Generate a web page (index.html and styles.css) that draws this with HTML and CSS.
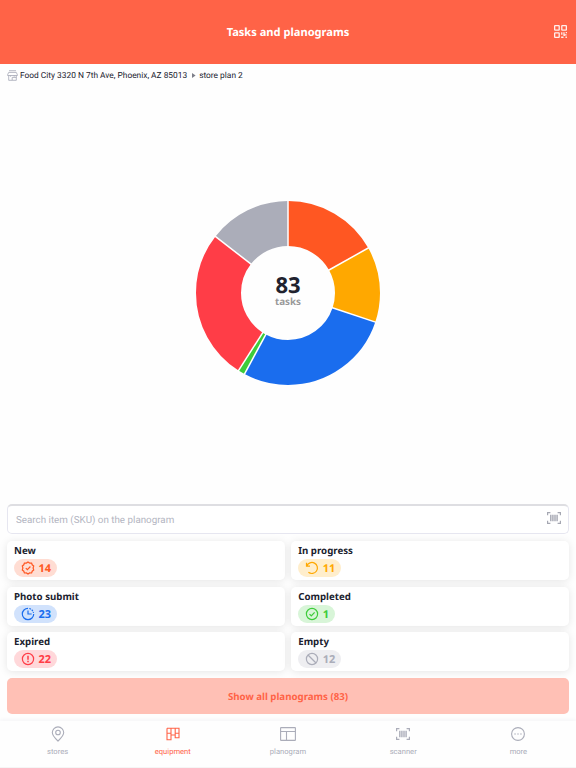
FILE: index.html
```
<!DOCTYPE html>
<html lang="en">
<head>
    <meta charset="UTF-8">
    <meta name="viewport" content="width=device-width, initial-scale=1.0">
    <title>Tasks and planograms</title>
    <link rel="stylesheet" href="styles.css">
</head>
<body>
    <!-- Icons used more than once -->
    <svg class="sprite">
        <symbol id="icon-barcode" viewBox="0 0 14 14">
            <path d="M.6 4.200V1.600h2.800M10.600 1.600h2.800v2.600M13.400 9.800v2.600h-2.800M3.400 12.400H.6V9.800" fill="none" stroke="currentColor" stroke-width="1.2"/>
            <path d="M3.800 3.800v6.400M5.900 3.800v6.400M8 3.800v6.400M10.100 3.800v6.400" stroke="currentColor" stroke-width="1.4"/>
        </symbol>
    </svg>

    <header class="header">
        <h1>Tasks and planograms</h1>
        <svg class="qr-icon" viewBox="0 0 12 12" fill="none" stroke="currentColor" stroke-width="1.2">
            <rect x=".6" y=".6" width="4.2" height="4.2" rx=".4"/>
            <rect x="7.2" y=".6" width="4.2" height="4.2" rx=".4"/>
            <rect x=".6" y="7.2" width="4.2" height="4.2" rx=".4"/>
            <path d="M7.2 6.6v2.5M6.6 11.3h2.2M9.2 6.6v2.6h2.4M11.4 6.4v1.3M10.6 11.3h1.3M9.4 9v1.2"/>
        </svg>
    </header>

    <!-- Store and plan -->
    <div class="breadcrumb">
        <svg class="store-icon" viewBox="0 0 11 11" fill="none" stroke="currentColor" stroke-width=".8">
            <path d="M2 .7h7M1.7 2.4h7.6l1.1 2.4v.7H.6v-.7zM1.7 5.5v4.8h3.5M9.3 5.5v4.8H5.2V7.4h4.1M3.6 5.5v1.2M7.2 5.5v1.2"/>
        </svg>
        <span class="crumb-store">Food City 3320 N 7th Ave, Phoenix, AZ 85013</span>
        <svg class="crumb-arrow" viewBox="0 0 4 5"><path d="M0 0l3.6 2.5L0 5z" fill="currentColor"/></svg>
        <span class="crumb-plan">store plan 2</span>
    </div>

    <!-- Chart, one unit of path length per task -->
    <main class="chart-section">
        <div class="chart">
            <svg viewBox="-92 -92 184 184" width="184" height="184">
                <g fill="none" stroke-width="45" transform="rotate(-90)">
                    <circle r="69.5" pathLength="83" stroke="#ff5722" stroke-dasharray="14 69"/>
                    <circle r="69.5" pathLength="83" stroke="#ffa800" stroke-dasharray="11 72" stroke-dashoffset="-14"/>
                    <circle r="69.5" pathLength="83" stroke="#1a6dee" stroke-dasharray="23 60" stroke-dashoffset="-25"/>
                    <circle r="69.5" pathLength="83" stroke="#3dcc3a" stroke-dasharray="1 82" stroke-dashoffset="-48"/>
                    <circle r="69.5" pathLength="83" stroke="#ff3d47" stroke-dasharray="22 61" stroke-dashoffset="-49"/>
                    <circle r="69.5" pathLength="83" stroke="#abadb9" stroke-dasharray="12 71" stroke-dashoffset="-71"/>
                </g>
                <g stroke="#fff" stroke-width="1.5">
                    <path d="M0-46v-47"/>
                    <path d="M0-46v-47" transform="rotate(60.72)"/>
                    <path d="M0-46v-47" transform="rotate(108.43)"/>
                    <path d="M0-46v-47" transform="rotate(208.19)"/>
                    <path d="M0-46v-47" transform="rotate(212.53)"/>
                    <path d="M0-46v-47" transform="rotate(307.95)"/>
                </g>
            </svg>
            <div class="chart-label">
                <strong>83</strong>
                <span>tasks</span>
            </div>
        </div>
    </main>

    <section class="panel">
        <div class="search">
            <input type="text" placeholder="Search item (SKU) on the planogram">
            <svg class="search-icon"><use href="#icon-barcode"/></svg>
        </div>

        <div class="cards">
            <div class="card">
                <h2>New</h2>
                <div class="badge badge-new">
                    <svg viewBox="0 0 14 14"><path d="M7 1l1.6 1.1 2-.1.6 1.800 1.500 1.200L12.100 7l.6 2-1.500 1.200-.6 1.800-2-.1L7 13l-1.600-1.100-2 .1-.6-1.800L1.300 9l.6-2-.6-2 1.500-1.200.6-1.800 2 .1zM4.800 7.100l1.600 1.600 3-3.200"/></svg>
                    <span>14</span>
                </div>
            </div>
            <div class="card">
                <h2>In progress</h2>
                <div class="badge badge-progress">
                    <svg viewBox="0 0 14 14"><path d="M1.500 1.700v3.500H5M1.800 5A5.500 5.500 0 1 1 3.400 11.200"/></svg>
                    <span>11</span>
                </div>
            </div>
            <div class="card">
                <h2>Photo submit</h2>
                <div class="badge badge-submit">
                    <svg viewBox="0 0 14 14"><path d="M7 1.300A5.700 5.700 0 1 0 12.700 7M7 3.500V7h3.700"/><path d="M8.300 1.500a5.700 5.700 0 0 1 4.200 4.300" stroke-dasharray="1.700 1"/></svg>
                    <span>23</span>
                </div>
            </div>
            <div class="card">
                <h2>Completed</h2>
                <div class="badge badge-completed">
                    <svg viewBox="0 0 14 14"><circle cx="7" cy="7" r="5.6"/><path d="M4.500 7.100l1.800 1.700 3.300-3.400"/></svg>
                    <span>1</span>
                </div>
            </div>
            <div class="card">
                <h2>Expired</h2>
                <div class="badge badge-expired">
                    <svg viewBox="0 0 14 14"><circle cx="7" cy="7" r="5.6"/><path d="M7 3.800v4M7 8.800v1.400" stroke-width="1.5"/></svg>
                    <span>22</span>
                </div>
            </div>
            <div class="card">
                <h2>Empty</h2>
                <div class="badge badge-empty">
                    <svg viewBox="0 0 14 14"><circle cx="7" cy="7" r="5.6"/><path d="M3 3l8 8"/></svg>
                    <span>12</span>
                </div>
            </div>
        </div>

        <button class="show-all">Show all planograms (83)</button>
    </section>

    <nav class="tabs">
        <a class="tab">
            <svg viewBox="0 0 16 16"><path d="M8 15C5.500 12.700 2.300 9.900 2.300 6.600a5.700 5.700 0 0 1 11.400 0C13.700 9.900 10.500 12.700 8 15z"/><circle cx="8" cy="6.500" r="2.300"/></svg>
            <span>stores</span>
        </a>
        <a class="tab active">
            <svg viewBox="0 0 16 16"><path d="M2 2.300h12v9.500h-3.800V2.300M6 2.300v11.500H2V2.300M2 7.300h4M6 9h4.200M10.200 7.300H14"/></svg>
            <span>equipment</span>
        </a>
        <a class="tab">
            <svg viewBox="0 0 16 16"><rect x=".6" y="1.600" width="14.800" height="12.800" rx=".5"/><path d="M.6 5.500h14.800M6.500 5.500v8.900"/></svg>
            <span>planogram</span>
        </a>
        <a class="tab">
            <svg class="tab-barcode"><use href="#icon-barcode"/></svg>
            <span>scanner</span>
        </a>
        <a class="tab">
            <svg viewBox="0 0 16 16"><circle cx="8" cy="8" r="6.400"/><path d="M4.300 8h1.500M7.250 8h1.500M10.200 8h1.500"/></svg>
            <span>more</span>
        </a>
    </nav>
</body>
</html>
```
FILE: styles.css
```
* {
    box-sizing: border-box;
}
body {
    margin: 0;
    height: 768px;
    display: flex;
    flex-direction: column;
    overflow: hidden;
    background: #fefefe;
    color: #20222e;
    font-family: "Noto Sans", sans-serif;
    text-rendering: geometricPrecision;
}
h1, h2 {
    margin: 0;
}
.sprite {
    display: none;
}

/* Header */
.header {
    height: 64px;
    flex: none;
    display: grid;
    grid-template-columns: 1fr auto 1fr;
    align-items: center;
    padding: 0 9px;
    background: #ff6347;
    color: #fff;
}
.header h1 {
    grid-column: 2;
    padding-top: 2px;
    font-size: 11.1px;
    line-height: 16px;
}
.qr-icon {
    width: 13px;
    height: 13px;
    justify-self: end;
    margin-bottom: 2px;
    opacity: 0.9;
}

.breadcrumb {
    display: flex;
    align-items: center;
    height: 23px;
    padding-left: 7px;
    font-family: Roboto, sans-serif;
    font-size: 8.37px;
}
.store-icon {
    width: 11px;
    height: 11px;
    margin-right: 2px;
    color: #a5a7b5;
}
.crumb-arrow {
    width: 4px;
    height: 5px;
    margin: 0 3px 0 5px;
    color: #7d7f8a;
}

/* Chart */
.chart-section {
    flex: 1;
    display: flex;
    justify-content: center;
    align-items: center;
    padding-bottom: 6px;
}
.chart {
    display: grid;
}
.chart > * {
    grid-area: 1 / 1;
}
.chart-label {
    display: flex;
    flex-direction: column;
    align-items: center;
    justify-content: center;
    padding-bottom: 3px;
}
.chart-label strong {
    font-size: 22px;
    line-height: 22px;
}
.chart-label span {
    font-size: 9.8px;
    font-weight: bold;
    line-height: 12px;
    color: #999;
}

/* Search and status cards */
.panel {
    padding: 0 7px 7px;
}
.search {
    display: flex;
    align-items: center;
    height: 30px;
    padding: 0 7px 0 8px;
    border: 1px solid #e6e6f0;
    border-top: 2px solid #dedee2;
    border-radius: 5px;
    background: #fff;
}
.search input {
    flex: 1;
    padding: 1px 0 0;
    border: 0;
    outline: 0;
    background: none;
    font-family: Roboto, sans-serif;
    font-size: 9.8px;
    text-rendering: inherit;
}
.search input::placeholder {
    color: #b3b5c1;
}
.search-icon {
    width: 14px;
    height: 14px;
    margin-bottom: 3px;
    color: #a5a7b2;
}
.cards {
    display: grid;
    grid-template-columns: 1fr 1fr;
    gap: 6.5px;
    padding: 7px 0;
}
.card {
    height: 39px;
    padding: 2px 7px;
    border-radius: 5px;
    background: #fff;
    box-shadow: 0 1px 9px rgba(0, 0, 0, 0.1);
}
.card h2 {
    font-size: 9.7px;
    line-height: 15px;
}
.badge {
    display: inline-flex;
    align-items: center;
    vertical-align: top;
    gap: 3.5px;
    height: 18px;
    margin-top: 1px;
    padding: 0 6px 0 7px;
    border-radius: 9px;
    font-size: 11px;
    font-weight: bold;
}
.badge span {
    padding-top: 1px;
}
.badge svg {
    width: 14px;
    height: 14px;
    fill: none;
    stroke: currentColor;
    stroke-width: 1.2;
}
.badge-new {
    background: #ffddd3;
    color: #ff5722;
}
.badge-progress {
    background: #ffeecc;
    color: #ffa800;
}
.badge-submit {
    background: #d1e2fc;
    color: #1a6dee;
}
.badge-completed {
    background: #d8f5d8;
    color: #3dcc3a;
}
.badge-expired {
    background: #ffd8da;
    color: #ff3d47;
}
.badge-empty {
    background: #eeeef1;
    color: #abadb9;
}
.show-all {
    display: block;
    width: 100%;
    height: 36px;
    border: 0;
    border-radius: 5px;
    background: #ffc0b5;
    color: #ff6347;
    font-family: inherit;
    font-size: 9.7px;
    font-weight: bold;
    text-rendering: inherit;
}

/* Bottom tabs */
.tabs {
    display: grid;
    grid-template-columns: repeat(5, 1fr);
    height: 47px;
    flex: none;
    padding-top: 5px;
    border-bottom: 1px solid #f5f5f5;
    background: #fefefe;
    box-shadow: 0 -1px 4px rgba(30, 30, 90, 0.05);
}
.tab {
    display: flex;
    flex-direction: column;
    align-items: center;
    color: #abadb9;
    font-family: Roboto, sans-serif;
    font-size: 7.6px;
    line-height: 10px;
}
.tab svg {
    width: 16px;
    height: 16px;
    margin-bottom: 5px;
    fill: none;
    stroke: currentColor;
    stroke-width: 1.1;
}
.tab .tab-barcode {
    width: 14px;
}
.tab.active {
    color: #ff6347;
}
```
